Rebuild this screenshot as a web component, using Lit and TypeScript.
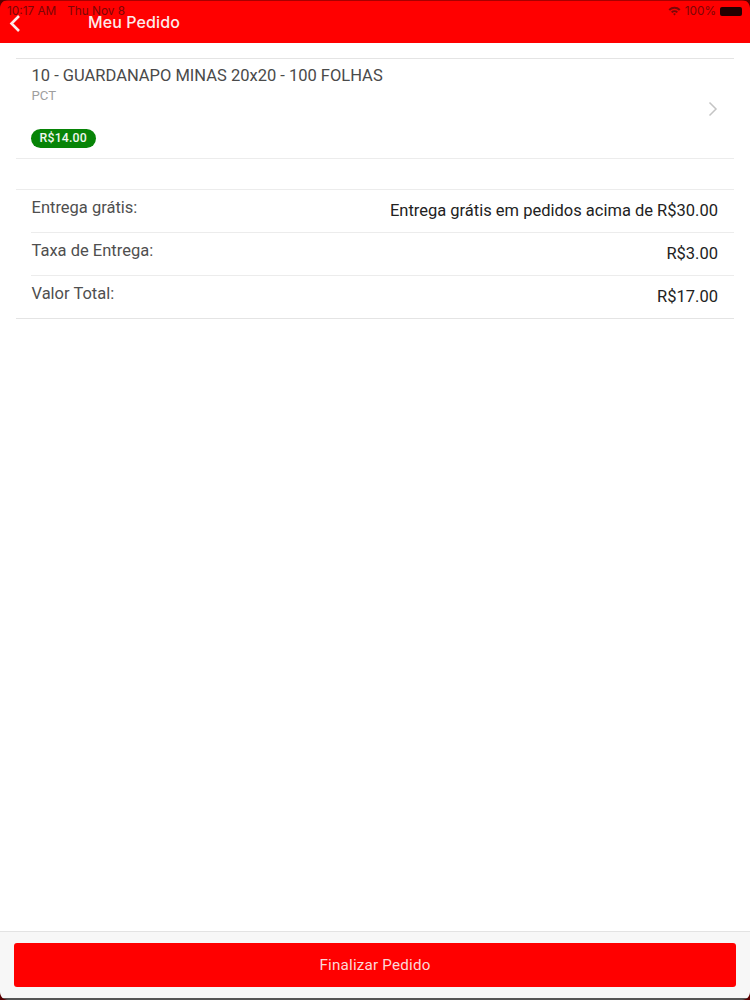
import { LitElement, html, css } from "lit";
import { customElement } from "lit/decorators.js";

@customElement("app-root")
export class AppRoot extends LitElement {
  static styles = css`
    :host {
      display: block;
      width: 750px;
      height: 1000px;
      background: #fff;
      font-family: Roboto, "Liberation Sans", sans-serif;
      position: relative;
      overflow: hidden;
    }
    .page { display: flex; flex-direction: column; height: 1000px; }
    .header {
      height: 43px;
      flex: none;
      background: #ff0000;
      border-top: 1px solid #a80000;
      box-sizing: border-box;
      display: flex;
      align-items: center;
      position: relative;
      padding-top: 1px;
    }
    .back { width: 14px; height: 20px; margin-left: 8px; flex: none; }
    .title {
      margin-left: 66px;
      color: #fdeaea;
      font-size: 16px;
      font-weight: 500;
      letter-spacing: 0.1px;
      font-family: Inter, Roboto, sans-serif;
      transform: translateY(-1px);
    }
    .status {
      position: absolute;
      top: 3px;
      left: 7px;
      right: 8px;
      height: 14px;
      display: flex;
      align-items: center;
      color: #7c0606;
      font-size: 11.8px;
      line-height: 14px;
      font-family: Inter, Roboto, sans-serif;
    }
    .status .date { margin-left: 11px; }
    .status .right { margin-left: auto; display: flex; align-items: center; gap: 4px; }
    .wifi { width: 13px; height: 10px; }
    .battery { width: 22px; height: 9px; background: #200; border-radius: 2px; }
    .content { flex: 1; padding: 15px 16px 0 16px; display: flex; flex-direction: column; }
    .item {
      height: 101px;
      box-sizing: border-box;
      border-top: 1px solid #e4e4e4;
      border-bottom: 1px solid #ececec;
      padding: 7px 0 0 15px;
      position: relative;
      display: flex;
      flex-direction: column;
      align-items: flex-start;
    }
    .name { font-size: 16.5px; line-height: 20px; color: #4a4a4a; margin-left: 0.5px; }
    .unit { font-size: 13.2px; line-height: 16px; color: #9e9e9e; margin-top: 2px; margin-left: 0.5px; }
    .price {
      margin-top: 25px;
      height: 19px;
      padding: 0 8.5px;
      border-radius: 10px;
      background: #078407;
      color: #f0f7f0;
      font-size: 12.3px;
      font-weight: 500;
      line-height: 19px;
      letter-spacing: 0.2px;
    }
    .chev { position: absolute; right: 16px; top: 42px; width: 10px; height: 16px; }
    .totals { margin-top: 30px; border-top: 1px solid #ececec; border-bottom: 1px solid #e4e4e4; }
    .row {
      height: 42px;
      box-sizing: border-box;
      margin-left: 15px;
      display: flex;
      justify-content: space-between;
      font-size: 16.5px;
      padding-left: 0.5px;
      padding-right: 16px;
    }
    .row + .row { border-top: 1px solid #ececec; height: 43px; }
    .row .l { color: #4f4f4f; margin-top: 8px; line-height: 20px; }
    .row .r { color: #222; margin-top: 11px; line-height: 20px; }
    .row + .row .l { margin-top: 8px; }
    .footer {
      flex: none;
      height: 69px;
      box-sizing: border-box;
      background: #f7f7f7;
      border-top: 1px solid #e3e3e3;
      padding: 11px 14px 0 14px;
    }
    .btn {
      height: 44px;
      border-radius: 3px;
      background: #ff0000;
      color: #fbd8d8;
      display: flex;
      align-items: center;
      justify-content: center;
      font-size: 15.2px;
      letter-spacing: 0.2px;
    }
    .corner { position: absolute; width: 8px; height: 8px; }
    .tl { top: 0; left: 0; }
    .tr { top: 0; right: 0; transform: scaleX(-1); }
    .bl { bottom: 0; left: 0; transform: scaleY(-1); }
    .br { bottom: 0; right: 0; transform: scale(-1, -1); }
    .bottomline { position: absolute; left: 0; right: 0; bottom: 0; height: 2px; background: #555; }
  `;

  private corner(cls: string) {
    return html`<svg class="corner ${cls}" viewBox="0 0 8 8"><path d="M0 0H8C3.6 0 0 3.6 0 8Z" fill="#5a0000"/></svg>`;
  }

  render() {
    return html`
      <div class="page">
        <div class="header">
          <svg class="back" viewBox="0 0 14 20"><path d="M11 3L3.5 10.5L11 18" fill="none" stroke="#fdeaea" stroke-width="2.6"/></svg>
          <div class="title">Meu Pedido</div>
          <div class="status">
            <span>10:17 AM</span><span class="date">Thu Nov 8</span>
            <span class="right">
              <svg class="wifi" viewBox="0 0 13 10"><path d="M0.5 3.2A8.5 8.5 0 0 1 12.5 3.2L11 4.7A6.4 6.4 0 0 0 2 4.7ZM3 5.7A5 5 0 0 1 10 5.7L8.6 7.1A3 3 0 0 0 4.4 7.1ZM5.2 7.9A1.8 1.8 0 0 1 7.8 7.9L6.5 9.5Z" fill="#7a0808"/></svg>
              <span>100%</span>
              <span class="battery"></span>
            </span>
          </div>
        </div>
        <div class="content">
          <div class="item">
            <div class="name">10 - GUARDANAPO MINAS 20x20 - 100 FOLHAS</div>
            <div class="unit">PCT</div>
            <div class="price">R$14.00</div>
            <svg class="chev" viewBox="0 0 10 16"><path d="M1.5 1.5L8 8L1.5 14.5" fill="none" stroke="#c4c4c4" stroke-width="1.5"/></svg>
          </div>
          <div class="totals">
            <div class="row"><span class="l">Entrega grátis:</span><span class="r">Entrega grátis em pedidos acima de R$30.00</span></div>
            <div class="row"><span class="l">Taxa de Entrega:</span><span class="r">R$3.00</span></div>
            <div class="row"><span class="l">Valor Total:</span><span class="r">R$17.00</span></div>
          </div>
        </div>
        <div class="footer"><div class="btn">Finalizar Pedido</div></div>
      </div>
      <div class="bottomline"></div>
      ${this.corner("tl")}${this.corner("tr")}${this.corner("bl")}${this.corner("br")}
    `;
  }
}
